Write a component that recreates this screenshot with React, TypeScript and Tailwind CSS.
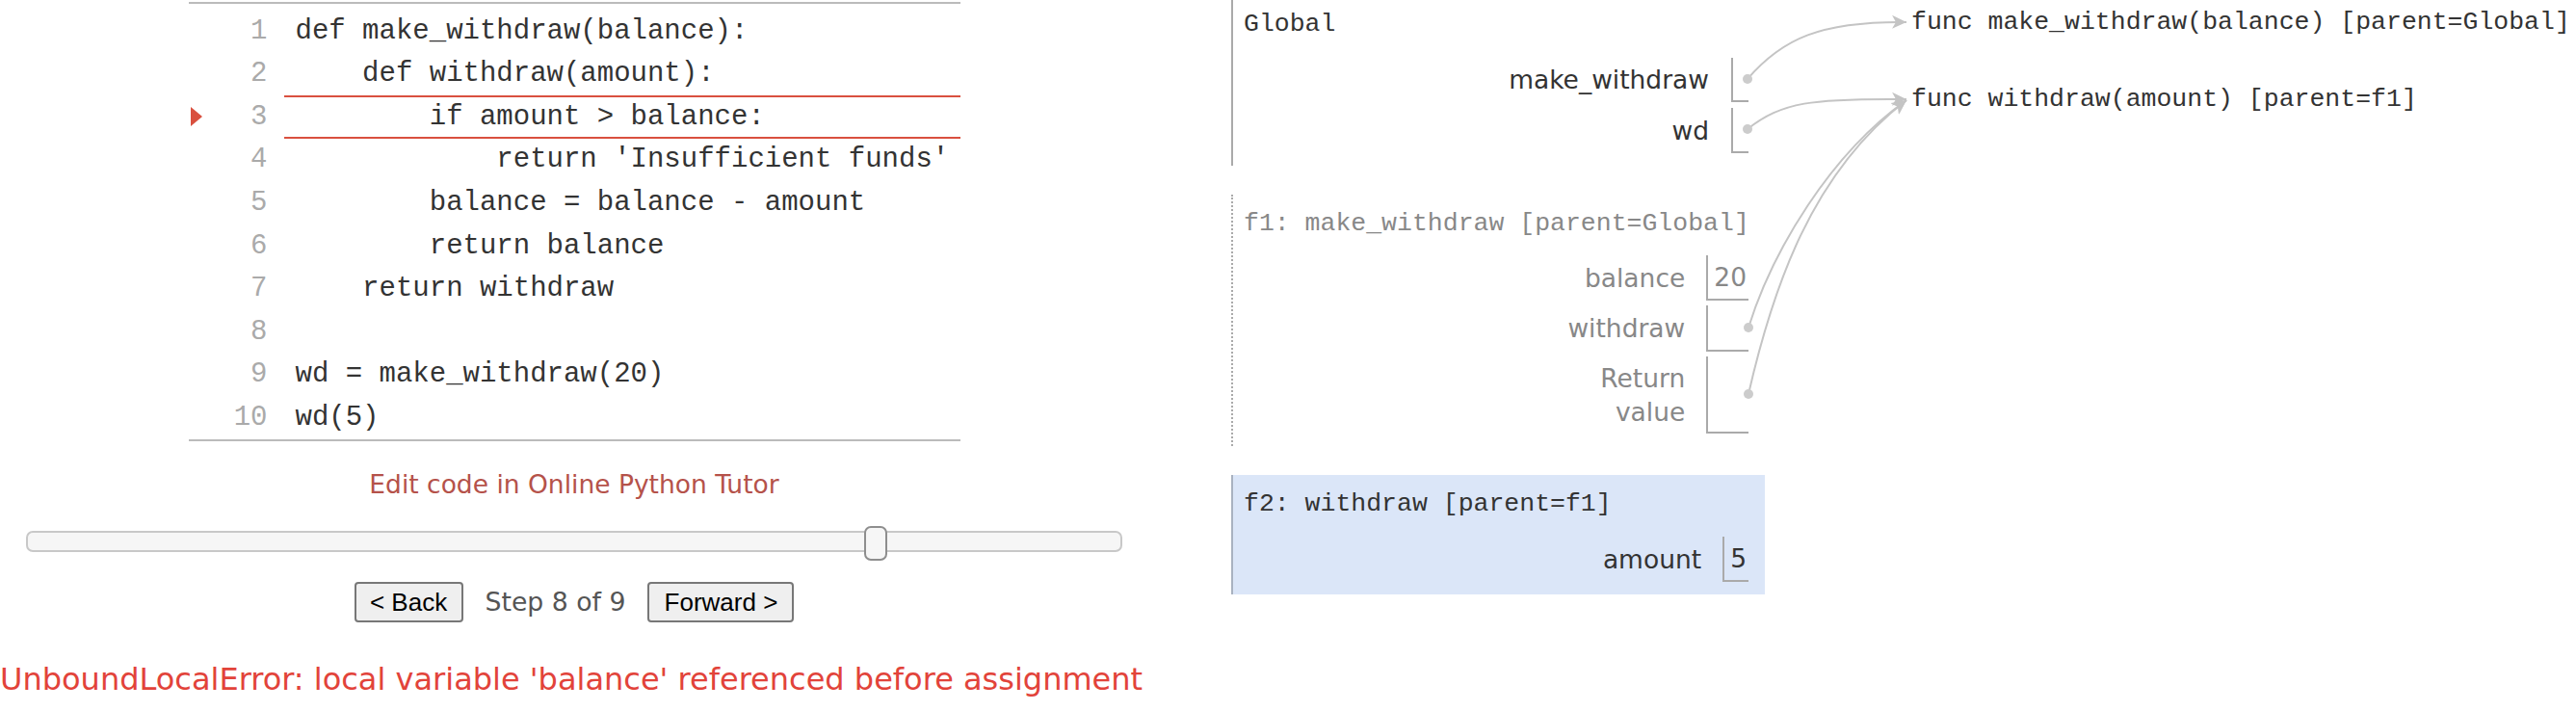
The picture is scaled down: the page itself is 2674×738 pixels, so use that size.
import React from "react";

const codeLines = [
  "def make_withdraw(balance):",
  "    def withdraw(amount):",
  "        if amount > balance:",
  "            return 'Insufficient funds'",
  "        balance = balance - amount",
  "        return balance",
  "    return withdraw",
  "",
  "wd = make_withdraw(20)",
  "wd(5)",
];

function CodeRow({ n, text }: { n: number; text: string }) {
  const active = n === 3;
  return (
    <div className="flex h-[44.6px] items-stretch">
      <div className="w-[26px] flex items-center">
        {active && (
          <svg width="14" height="22" viewBox="0 0 14 22" className="ml-[2px]">
            <polygon points="0,1 12,11 0,21" fill="#d9503f" />
          </svg>
        )}
      </div>
      <div className="w-[56px] flex items-center justify-end text-[#aaaaaa]">{n}</div>
      <div className="w-[17px]" />
      <div
        className={
          "flex-1 flex items-center pl-[12px] whitespace-pre text-[#333333] " +
          (active ? "border-y-2 border-[#d9503f]" : "")
        }
      >
        {text}
      </div>
    </div>
  );
}

function Box({ children, w }: { children?: React.ReactNode; w?: string }) {
  return (
    <div className={"border-l-2 border-b-2 border-[#aaaaaa] flex items-center pl-[6px] " + (w ?? "")}>
      {children}
    </div>
  );
}

export default function App() {
  const mono = "font-['Liberation_Mono','DejaVu_Sans_Mono',monospace]";
  const sans = "font-['DejaVu_Sans','Verdana',sans-serif]";
  return (
    <div className="relative w-[2674px] h-[738px] bg-white flex items-start overflow-hidden">
      {/* Left column */}
      <div className="w-[1192px] flex flex-col items-center">
        <div className={"mt-[2px] w-[801px] border-t-2 border-b-2 border-[#bbbbbb] pt-[6px] text-[29px] " + mono}>
          {codeLines.map((t, i) => (
            <CodeRow key={i} n={i + 1} text={t} />
          ))}
        </div>
        <div className={"mt-[29px] h-[32px] leading-[32px] text-[26.5px] text-[#b5524a] " + sans}>
          Edit code in Online Python Tutor
        </div>
        <div className="mt-[32px] relative w-[1138px] h-[22px] rounded-[7px] border-2 border-[#c8c8c8] bg-[#f6f6f6]">
          <div className="absolute left-[868px] top-[-7px] w-[24px] h-[36px] rounded-[7px] border-2 border-[#8e8e8e] bg-[#f6f6f6]" />
        </div>
        <div className="mt-[31px] flex items-center gap-[23px]">
          <button className="h-[42px] w-[113px] rounded-[4px] border-2 border-[#777777] bg-[#efefef] text-[26px] text-black font-['Liberation_Sans',Arial,sans-serif] leading-none">
            &lt; Back
          </button>
          <span className={"text-[26.7px] text-[#555555] " + sans}>Step 8 of 9</span>
          <button className="h-[42px] w-[152px] rounded-[4px] border-2 border-[#777777] bg-[#efefef] text-[26px] text-black font-['Liberation_Sans',Arial,sans-serif] leading-none">
            Forward &gt;
          </button>
        </div>
        <div className={"self-start mt-[39px] h-[40px] leading-[40px] text-[32px] text-[#e2433a] whitespace-nowrap " + sans}>
          UnboundLocalError: local variable 'balance' referenced before assignment
        </div>
      </div>

      {/* Right column: frames */}
      <div className="ml-[86px] w-[554px] flex flex-col">
        {/* Global */}
        <div className="h-[172px] border-l-2 border-[#aaaaaa] pt-[9px] pl-[11px] pr-[17px] flex flex-col">
          <div className={"h-[32px] leading-[32px] text-[26.5px] text-[#333333] whitespace-nowrap " + mono}>Global</div>
          <div className={"mt-[19px] self-end grid grid-cols-[auto_auto] gap-x-[23px] gap-y-[6px] text-[26.5px] text-[#333333] " + sans}>
            <div className="h-[46px] flex items-center justify-end">make_withdraw</div>
            <Box w="w-[18px] h-[46px]" />
            <div className="h-[47px] flex items-center justify-end">wd</div>
            <Box w="w-[18px] h-[47px]" />
          </div>
        </div>
        {/* f1 */}
        <div className="mt-[30px] h-[261px] border-l-2 border-dotted border-[#aaaaaa] pt-[14px] pl-[11px] pr-[17px] flex flex-col">
          <div className={"h-[32px] leading-[32px] text-[26.5px] text-[#888888] whitespace-nowrap " + mono}>
            f1: make_withdraw [parent=Global]
          </div>
          <div className={"mt-[17px] self-end grid grid-cols-[auto_auto] gap-x-[22px] gap-y-[5px] text-[26.5px] text-[#888888] " + sans}>
            <div className="h-[47px] flex items-center justify-end">balance</div>
            <Box w="h-[47px] pr-[2px]">20</Box>
            <div className="h-[48px] flex items-center justify-end">withdraw</div>
            <Box w="h-[48px]" />
            <div className="h-[80px] flex flex-col justify-center items-end leading-[35px]">
              <span>Return</span>
              <span>value</span>
            </div>
            <Box w="h-[80px]" />
          </div>
        </div>
        {/* f2 */}
        <div className="mt-[30px] h-[124px] bg-[#dbe6f8] border-l-2 border-[#a9b2c0] pt-[14px] pl-[11px] pr-[17px] flex flex-col">
          <div className={"h-[32px] leading-[32px] text-[26.5px] text-[#333333] whitespace-nowrap " + mono}>f2: withdraw [parent=f1]</div>
          <div className={"mt-[18px] self-end grid grid-cols-[auto_auto] gap-x-[22px] text-[26.5px] text-[#333333] " + sans}>
            <div className="h-[47px] flex items-center justify-end">amount</div>
            <Box w="h-[47px] pr-[2px]">5</Box>
          </div>
        </div>
      </div>

      {/* Heap */}
      <div className={"ml-[152px] flex flex-col text-[26.5px] text-[#333333] " + mono}>
        <div className="mt-[7px] h-[32px] leading-[32px] whitespace-nowrap">func make_withdraw(balance) [parent=Global]</div>
        <div className="mt-[48px] h-[32px] leading-[32px] whitespace-nowrap">func withdraw(amount) [parent=f1]</div>
      </div>

      {/* Arrows overlay */}
      <svg className="absolute left-0 top-0 pointer-events-none" width="2674" height="738">
        <defs>
          <marker id="ah" markerUnits="userSpaceOnUse" markerWidth="18" markerHeight="16" refX="15" refY="8" orient="auto">
            <path d="M0,1 L15,8 L0,15 L4,8 z" fill="#c4c4c4" />
          </marker>
        </defs>
        <g fill="none" stroke="#c4c4c4" strokeWidth="2">
          <path d="M1814,82 C1850,40 1890,22 1979,23" markerEnd="url(#ah)" />
          <path d="M1814,134 C1850,106 1880,102 1979,103" markerEnd="url(#ah)" />
          <path d="M1815,340 C1840,260 1900,160 1979,104" markerEnd="url(#ah)" />
          <path d="M1815,409 C1840,300 1880,180 1979,104" markerEnd="url(#ah)" />
        </g>
        <g fill="#cccccc">
          <circle cx="1814" cy="82" r="5" />
          <circle cx="1814" cy="134" r="5" />
          <circle cx="1815" cy="340" r="5" />
          <circle cx="1815" cy="409" r="5" />
        </g>
      </svg>
    </div>
  );
}
